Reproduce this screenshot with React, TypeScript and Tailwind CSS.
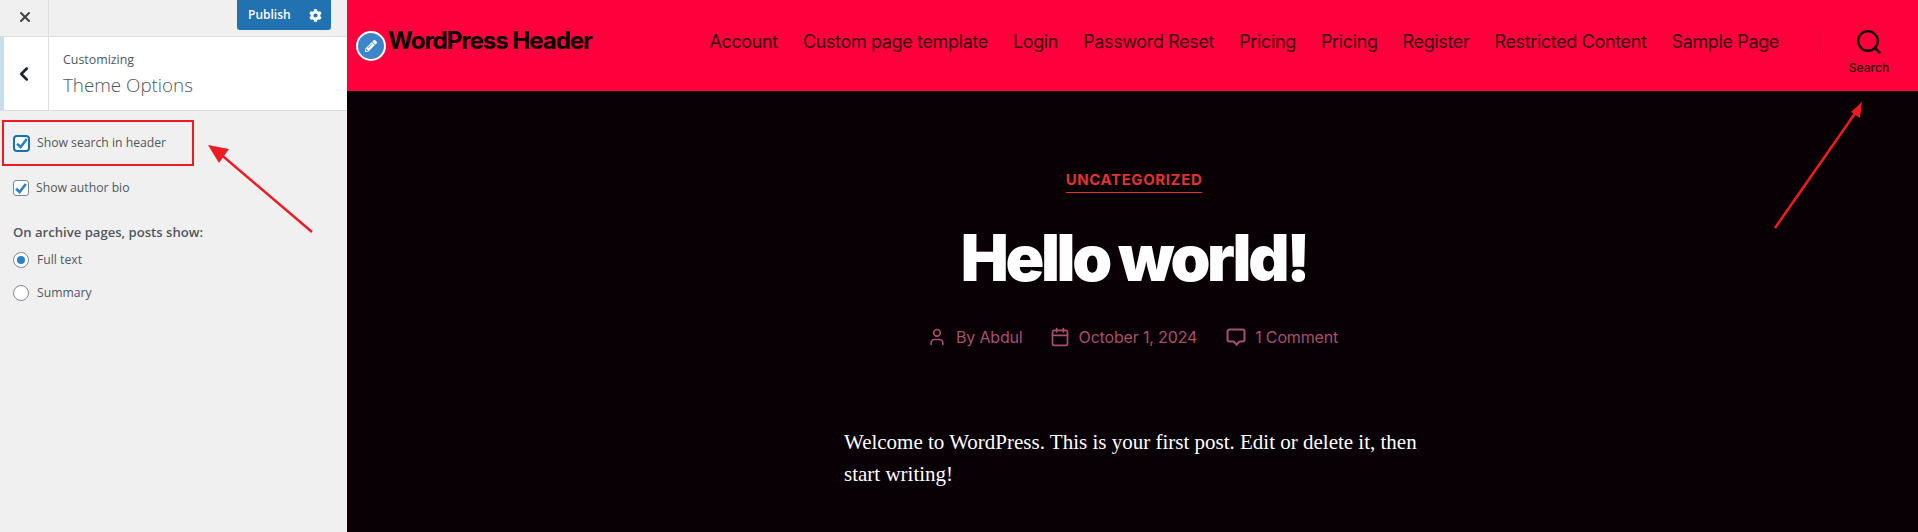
import { Calendar, ChevronLeft, User, X } from 'lucide-react';
import { FaCog, FaPencilAlt } from 'react-icons/fa';

const navItems = [
  'Account',
  'Custom page template',
  'Login',
  'Password Reset',
  'Pricing',
  'Pricing',
  'Register',
  'Restricted Content',
  'Sample Page',
];

const Tick = () => (
  <svg viewBox="0 0 12 11" className="w-[12px] h-[11px] shrink-0" fill="none" stroke="#2f7fc9" strokeWidth="2.6">
    <path d="M1 5.8 4.6 9 10.8 1" />
  </svg>
);

const Checkbox = ({ focused }: { focused?: boolean }) => (
  <span
    className={
      focused
        ? 'w-[17px] h-[17px] shrink-0 flex items-center justify-center bg-white rounded-[4px] border-2 border-[#1e6fb0]'
        : 'w-[16px] h-[16px] shrink-0 flex items-center justify-center bg-white rounded-[3px] border border-[#7e8993]'
    }
  >
    <Tick />
  </span>
);

const Radio = ({ checked }: { checked?: boolean }) => (
  <span className="w-[16px] h-[16px] shrink-0 flex items-center justify-center bg-white rounded-full border border-[#7e8993]">
    {checked && <span className="w-[8px] h-[8px] rounded-full bg-[#2f7fc9]" />}
  </span>
);

const Sidebar = () => (
  <aside className="w-[347px] h-full shrink-0 bg-[#f0f0f1] text-[#50575e] font-['Open_Sans',sans-serif] flex flex-col">
    <div className="h-[37px] flex border-b border-[#dddddd] shrink-0">
      <div className="w-[49px] border-r border-[#dddddd] flex items-center justify-center pb-[2px] pl-[2px] text-[#3c434a]">
        <X size={16} strokeWidth={3} />
      </div>
      <div className="flex-1 flex justify-end pr-[16px]">
        <div className="w-[94px] h-[30px] bg-[#2271b1] rounded-b-[3px] flex items-center text-white text-[12px] font-semibold">
          <span className="pl-[11px] w-[63px]">Publish</span>
          <FaCog size={13} className="ml-[9px]" />
        </div>
      </div>
    </div>
    <div className="h-[74px] flex bg-white border-b border-[#dddddd] shrink-0 border-l-[4px] border-l-[#c9dcec]">
      <div className="w-[45px] border-r border-[#dddddd] flex items-center justify-center pr-[4px] text-[#1d2327]">
        <ChevronLeft size={22} strokeWidth={2.8} />
      </div>
      <div className="pl-[14px] pt-[14px]">
        <div className="text-[12.4px] leading-[18px]">Customizing</div>
        <div className="text-[18.8px] leading-[28px] mt-[2px] font-light text-[#50575e]">Theme Options</div>
      </div>
    </div>
    <div className="pl-[13px] pt-[22px] text-[12.2px]">
      <label className="flex items-center gap-[7px] h-[20px]">
        <Checkbox focused />
        <span>Show search in header</span>
      </label>
      <label className="flex items-center gap-[7px] h-[20px] mt-[25px]">
        <Checkbox />
        <span>Show author bio</span>
      </label>
      <div className="font-semibold text-[13.1px] mt-[24px] leading-[20px]">On archive pages, posts show:</div>
      <label className="flex items-center gap-[8px] h-[20px] mt-[8px]">
        <Radio checked />
        <span>Full text</span>
      </label>
      <label className="flex items-center gap-[8px] h-[20px] mt-[13px]">
        <Radio />
        <span>Summary</span>
      </label>
    </div>
  </aside>
);

const Header = () => (
  <header className="h-[91px] shrink-0 bg-[#ff003c] text-[#0c0004] flex items-center font-['Inter',sans-serif]">
    <div className="ml-[9px] w-[30px] h-[30px] shrink-0 rounded-full bg-[#3b86c8] border-2 border-white flex items-center justify-center text-white">
      <FaPencilAlt size={12} />
    </div>
    <span className="ml-[2px] mb-[9px] text-[24px] font-bold tracking-[-0.042em] text-black">WordPress Header</span>
    <nav className="ml-auto mb-[9px] flex gap-[25px] text-[18px] tracking-[-0.02em] text-[#3a0012]">
      {navItems.map((item, i) => (
        <span key={i}>{item}</span>
      ))}
    </nav>
    <div className="ml-[38px] w-[1px] h-[27px] bg-[#dc0036] mb-[8px]" />
    <div className="w-[100px] self-start flex flex-col items-center pt-[30px] pl-[2px]">
      <svg viewBox="0 0 23 23" className="w-[24px] h-[24px]" fill="none" stroke="#0c0004" strokeWidth="2.2">
        <circle cx="10.5" cy="10.5" r="9.4" />
        <path d="m17.2 17.2 5 5" strokeWidth="2.5" />
      </svg>
      <span className="text-[12px] leading-[16px] font-medium mt-[6px] text-[#2a000c]">Search</span>
    </div>
  </header>
);

const Article = () => (
  <main className="flex-1 bg-[#090005] pl-[3px] flex flex-col items-center font-['Inter',sans-serif] overflow-hidden">
    <a className="mt-[80px] text-[15px] leading-[18px] font-bold tracking-[0.04em] text-[#dd3333] border-b border-[#dd3333] pb-[3px]">
      UNCATEGORIZED
    </a>
    <h1 className="mt-[26px] text-[64px] leading-[77px] font-black tracking-[-0.052em] text-white">Hello world!</h1>
    <div className="mt-[29px] pr-[3px] flex items-center gap-[27px] text-[16px] leading-[24px] tracking-[-0.01em] text-[#a5506c]">
      <span className="flex items-center gap-[9px]">
        <User size={20} strokeWidth={2} />
        By Abdul
      </span>
      <span className="flex items-center gap-[9px]">
        <Calendar size={20} strokeWidth={2} />
        October 1, 2024
      </span>
      <span className="ml-[2px] flex items-center gap-[9px]">
        <svg viewBox="0 0 20 20" className="w-[20px] h-[20px]" fill="none" stroke="currentColor" strokeWidth="2" strokeLinejoin="round">
          <path d="M3.5 2.5h13a2 2 0 0 1 2 2v8a2 2 0 0 1-2 2h-3l-3 3.2-2.6-3.2H3.5a2 2 0 0 1-2-2v-8a2 2 0 0 1 2-2z" />
        </svg>
        1 Comment
      </span>
    </div>
    <p className="mt-[77px] w-[580px] font-['Liberation_Serif',serif] text-[21px] leading-[32px] text-white">
      Welcome to WordPress. This is your first post. Edit or delete it, then start writing!
    </p>
  </main>
);

export default function App() {
  return (
    <div className="relative w-[1918px] h-[532px] flex overflow-hidden">
      <Sidebar />
      <div className="flex-1 flex flex-col min-w-0">
        <Header />
        <Article />
      </div>

      {/* annotations drawn over the screenshot */}
      <div className="absolute left-[2px] top-[120px] w-[192px] h-[46px] border-2 border-[#ed1c24]" />
      <svg className="absolute inset-0 w-full h-full pointer-events-none" viewBox="0 0 1918 532">
        <path d="M312 232 218 152" stroke="#ed1c24" strokeWidth="2.5" fill="none" />
        <path d="M208 145 229 149 219 163z" fill="#ed1c24" />
        <path d="M1775 228 1856 112" stroke="#ed1c24" strokeWidth="2.5" fill="none" />
        <path d="M1862 102 1860 118 1851 112z" fill="#ed1c24" />
      </svg>
    </div>
  );
}
